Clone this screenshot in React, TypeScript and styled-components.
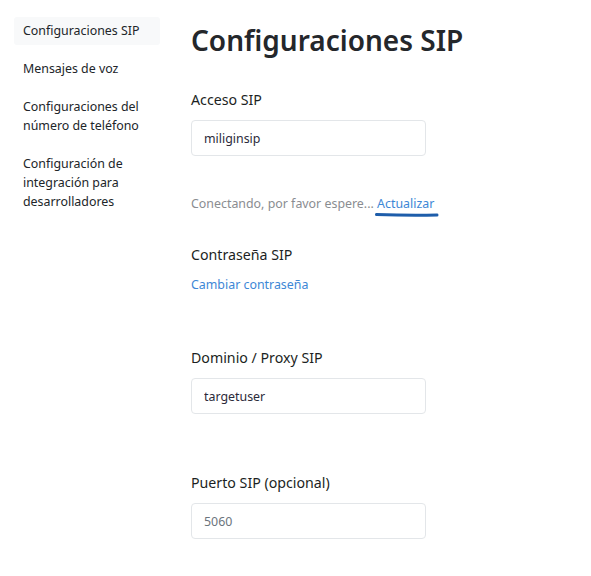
import styled, { createGlobalStyle } from "styled-components"

const GlobalStyle = createGlobalStyle`
	html, body {
		margin: 0;
		padding: 0;
		background: #fff;
	}
	body {
		font-family: "Noto Sans", "Open Sans", sans-serif;
		color: #212529;
	}
`

const Page = styled.div`
	display: flex;
	width: 591px;
	min-height: 576px;
	box-sizing: border-box;
	padding: 17px 0 0 14px;
`

const Sidebar = styled.nav`
	display: flex;
	flex-direction: column;
	width: 146px;
	flex-shrink: 0;
`

const NavItem = styled.a<{ $active?: boolean }>`
	display: block;
	padding: 4px 9px 5px;
	margin-bottom: 10px;
	font-size: 12.4px;
	line-height: 19px;
	color: #212529;
	background: ${(p) => (p.$active ? "#f8f9fa" : "transparent")};
	border-radius: 3px;
	text-decoration: none;
	cursor: pointer;
`

const Main = styled.main`
	display: flex;
	flex-direction: column;
	padding-left: 31px;
	width: 236px;
`

const Title = styled.h1`
	margin: 5px 0 0;
	font-size: 28px;
	line-height: 36px;
	font-weight: 600;
	color: #24272b;
	white-space: nowrap;
`

const Label = styled.div<{ $top: number }>`
	margin-top: ${(p) => p.$top}px;
	font-size: 14.2px;
	line-height: 20px;
	font-weight: 400;
	color: #1c1f23;
	white-space: nowrap;
`

const Input = styled.input`
	margin-top: 10px;
	width: 235px;
	height: 36px;
	box-sizing: border-box;
	padding: 0 12px;
	border: 1px solid #e3e6e9;
	border-radius: 4px;
	font-family: inherit;
	font-size: 12.4px;
	color: #2b2a3a;
	background: #fff;
	outline: none;

	&::placeholder {
		color: #6c757d;
	}
`

const Status = styled.div`
	margin-top: 38px;
	font-size: 12.4px;
	line-height: 20px;
	color: #8a8d91;
	white-space: nowrap;
`

const Link = styled.a`
	position: relative;
	color: #3d87d6;
	text-decoration: none;
	cursor: pointer;
`

const Scribble = styled.svg`
	position: absolute;
	left: -2px;
	top: 17px;
	overflow: visible;
`

const PlainLink = styled(Link)`
	margin-top: 10px;
	font-size: 12.4px;
	line-height: 20px;
	white-space: nowrap;
`

const App = () => {
	return (
		<>
			<GlobalStyle />
			<Page>
				<Sidebar>
					<NavItem $active>Configuraciones SIP</NavItem>
					<NavItem>Mensajes de voz</NavItem>
					<NavItem>Configuraciones del número de teléfono</NavItem>
					<NavItem>Configuración de integración para desarrolladores</NavItem>
				</Sidebar>
				<Main>
					<Title>Configuraciones SIP</Title>
					<Label $top={32}>Acceso SIP</Label>
					<Input defaultValue="miliginsip" />
					<Status>
						Conectando, por favor espere...{" "}
						<Link>
							Actualizar
							<Scribble width="64" height="6">
								<path
									d="M1.5 2.5 C 20 3.2, 42 3.6, 62 3"
									stroke="#1e5daa"
									strokeWidth="3"
									strokeLinecap="round"
									fill="none"
								/>
							</Scribble>
						</Link>
					</Status>
					<Label $top={31}>Contraseña SIP</Label>
					<PlainLink>Cambiar contraseña</PlainLink>
					<Label $top={53}>Dominio / Proxy SIP</Label>
					<Input defaultValue="targetuser" />
					<Label $top={59}>Puerto SIP (opcional)</Label>
					<Input placeholder="5060" />
				</Main>
			</Page>
		</>
	)
}

export default App
